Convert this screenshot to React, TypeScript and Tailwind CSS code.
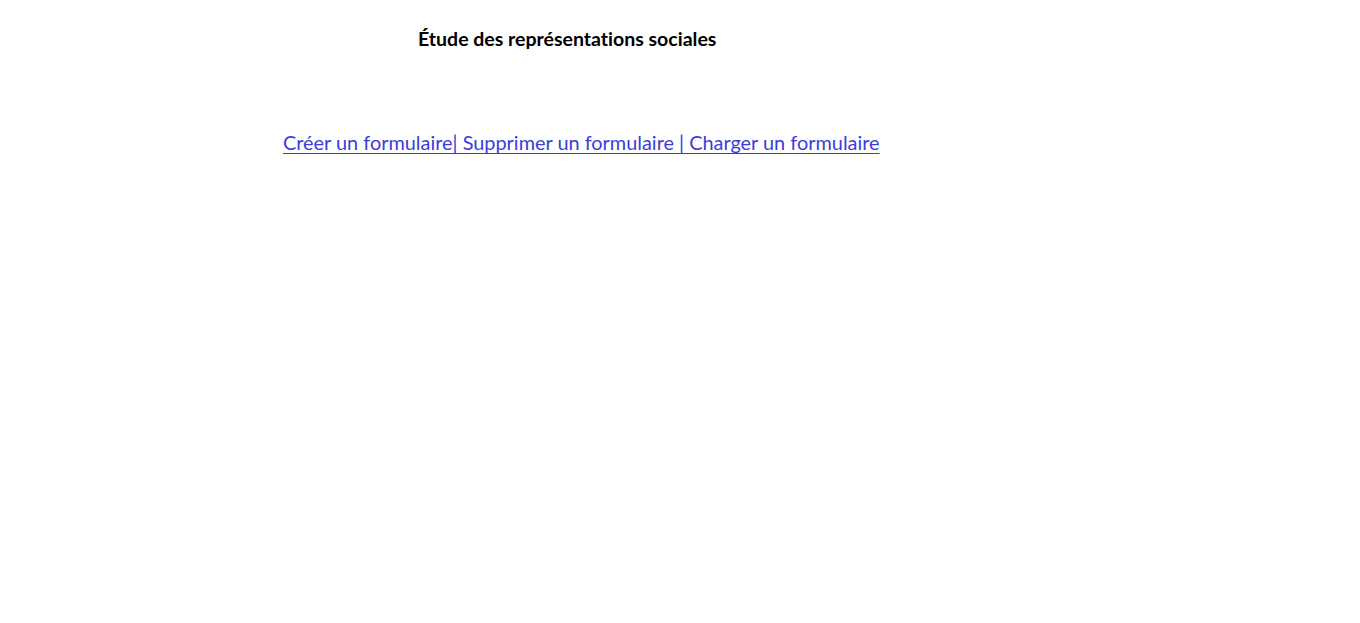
export default function App() {
  return (
    <div className="min-h-screen bg-white font-['Lato',sans-serif] [font-variant-ligatures:none]">
      <div className="pt-[27px] pl-[418px]">
        <h1 className="text-[19.5px] leading-[24px] font-bold text-black">Étude des représentations sociales</h1>
      </div>
      <nav className="mt-[79px] pl-[283px] text-[19.9px] leading-[24px] text-[#3c3cdc]">
        <a href="#" className="underline underline-offset-[3px] [text-decoration-skip-ink:none]">
          Créer un formulaire| Supprimer un formulaire | Charger un formulaire
        </a>
      </nav>
    </div>
  );
}
